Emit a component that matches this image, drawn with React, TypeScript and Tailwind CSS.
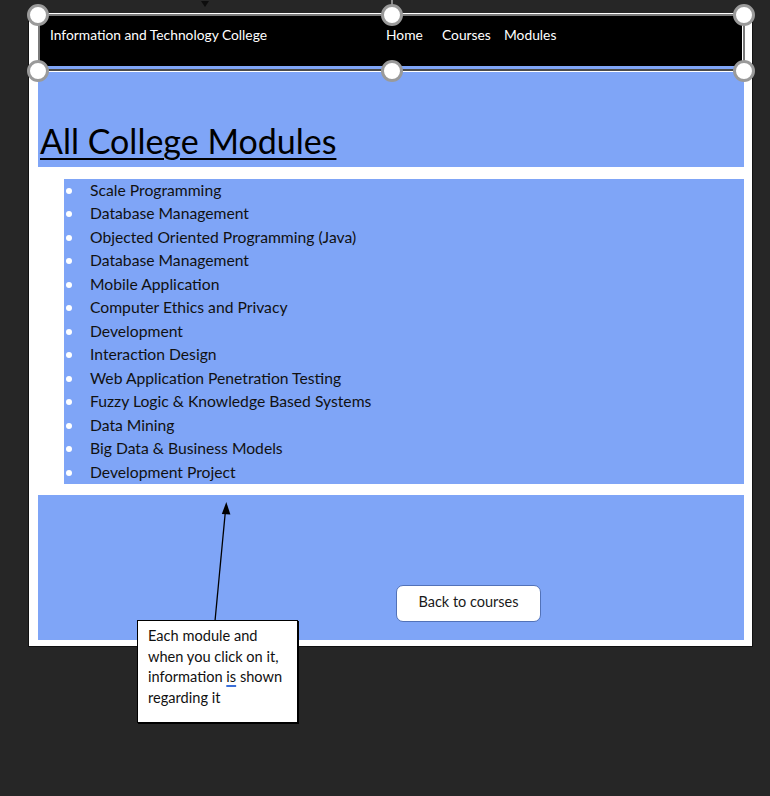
import React from "react";

const modules = [
  "Scale Programming",
  "Database Management",
  "Objected Oriented Programming (Java)",
  "Database Management",
  "Mobile Application",
  "Computer Ethics and Privacy",
  "Development",
  "Interaction Design",
  "Web Application Penetration Testing",
  "Fuzzy Logic & Knowledge Based Systems",
  "Data Mining",
  "Big Data & Business Models",
  "Development Project",
];

// selection handle centres around the header shape
const handles = [
  { x: 38, y: 15 },
  { x: 392, y: 15 },
  { x: 744, y: 15 },
  { x: 38, y: 71 },
  { x: 392, y: 71 },
  { x: 744, y: 71 },
];

const Handle = ({ x, y }: { x: number; y: number }) => (
  <div
    className="absolute w-[22px] h-[22px] rounded-full bg-white border-[3px] border-[#9a9a9a]"
    style={{ left: x - 11, top: y - 11 }}
  />
);

export default function App() {
  return (
    <div
      className="relative w-[770px] h-[796px] overflow-hidden bg-[#262626]"
      style={{ fontFamily: "Lato, 'Open Sans', sans-serif" }}
    >
      {/* page */}
      <div className="ml-[28px] mt-[13px] w-[725px] bg-white border-x border-b border-[#111] pl-[9px] pr-[8px] pt-[3px] pb-[6px]">
        {/* header bar */}
        <div className="mx-[2px] h-[50px] bg-black pt-[11px] pl-[10px] flex text-[13.8px] leading-[16px] text-white">
          <span className="w-[336px]">Information and Technology College</span>
          <span className="w-[56px]">Home</span>
          <span className="w-[62px]">Courses</span>
          <span>Modules</span>
        </div>

        {/* title */}
        <div className="h-[101px] bg-[#7fa5f7] flex items-end pl-[2px] pb-[6px]">
          <h1 className="text-[34px] leading-[40px] text-black underline underline-offset-[4px] decoration-[2px]">
            All College Modules
          </h1>
        </div>

        <div className="h-[12px]" />

        {/* module list */}
        <ul className="ml-[26px] h-[305px] bg-[#7fa5f7]">
          {modules.map((m, i) => (
            <li key={i} className="flex items-center h-[23.5px] text-[15.7px] text-[#111]">
              <span className="ml-[2px] w-[6px] h-[6px] rounded-full bg-white" />
              <span className="ml-[18px]">{m}</span>
            </li>
          ))}
        </ul>

        <div className="h-[11px]" />

        {/* footer area */}
        <div className="h-[145px] bg-[#7fa5f7] pt-[90px] pl-[358px]">
          <button className="w-[145px] h-[37px] rounded-[7px] bg-white border border-[#5272b8] text-[14.5px] text-[#1a1a1a] pb-[3px]">
            Back to courses
          </button>
        </div>
      </div>

      {/* selection frame around header */}
      <div className="absolute left-[38px] top-[14px] w-[707px] h-[57px] border-2 border-[#7a7a7a] border-b-[#4a4a4a] outline outline-1 outline-white" />
      <div className="absolute left-[391px] top-0 w-[2px] h-[5px] bg-[#8a8a8a]" />
      {handles.map((h, i) => (
        <Handle key={i} x={h.x} y={h.y} />
      ))}
      <svg className="absolute left-[199px] top-0" width="12" height="8" viewBox="0 0 12 8">
        <polygon points="2,1 10,1 6,7" fill="#0d0d0d" />
      </svg>

      {/* callout arrow */}
      <svg className="absolute left-0 top-0 pointer-events-none" width="770" height="796">
        <line x1="215" y1="621" x2="225.5" y2="510" stroke="#000" strokeWidth="1.3" />
        <polygon points="226.3,502 221.8,514 230.4,514.6" fill="#000" />
      </svg>

      {/* callout note */}
      <div className="absolute left-[137px] top-[620px] w-[161px] h-[103px] bg-white border border-black shadow-[1px_1px_0_#000] pl-[10px] pt-[5px] text-[14.6px] leading-[20.7px] text-[#111]">
        Each module and
        <br />
        when you click on it,
        <br />
        information{" "}
        <span className="underline decoration-[#3b6fd8] decoration-[1.5px] underline-offset-[3px]">is</span> shown
        <br />
        regarding it
      </div>
    </div>
  );
}
